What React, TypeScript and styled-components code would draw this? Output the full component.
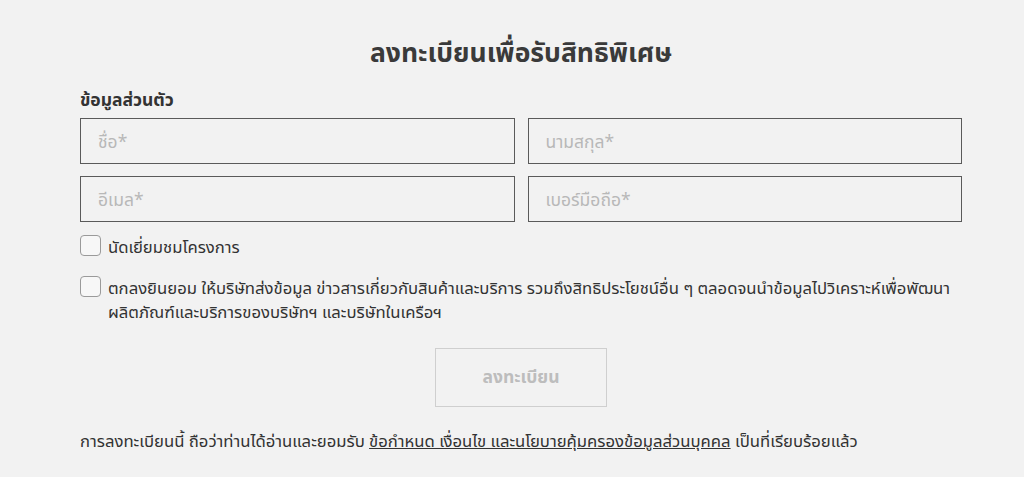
import React from "react";
import styled, { createGlobalStyle } from "styled-components";

const Global = createGlobalStyle`
  html, body { margin: 0; padding: 0; background: #f2f2f2; }
  body { font-family: "Noto Sans", "Noto Sans Thai", sans-serif; color: #333; }
  * { box-sizing: border-box; }
`;

const Page = styled.div`
  width: 1024px;
  height: 477px;
  background: #f2f2f2;
  padding: 30px 62px 0 80px;
  overflow: hidden;
`;

const Title = styled.h1`
  margin: 0;
  text-align: center;
  font-size: 26.5px;
  font-weight: 700;
  color: #3a3a3a;
  line-height: 44px;
`;

const Section = styled.div`
  margin-top: 14px;
  font-size: 17.5px;
  font-weight: 700;
  color: #333;
  line-height: 22px;
`;

const Grid = styled.div`
  margin-top: 8px;
  display: grid;
  grid-template-columns: 1fr 1fr;
  column-gap: 13px;
  row-gap: 12px;
`;

const Input = styled.input`
  height: 46px;
  width: 100%;
  border: 1.5px solid #5a5a5a;
  background: #f2f2f2;
  padding: 0 17px;
  font-family: inherit;
  font-size: 17.5px;
  color: #333;
  outline: none;
  &::placeholder { color: #b8b8b8; }
`;

const CheckRow = styled.label<{ $top: number }>`
  display: flex;
  align-items: flex-start;
  gap: 7px;
  margin-top: ${(p) => p.$top}px;
  font-size: 16.7px;
  line-height: 24px;
  color: #333;
`;

const Box = styled.span`
  flex: none;
  width: 21px;
  height: 21px;
  border: 1px solid #9a9a9a;
  border-radius: 4px;
  background: #f7f7f7;
`;

const ButtonWrap = styled.div`
  display: flex;
  justify-content: center;
  margin-top: 24px;
`;

const Button = styled.button`
  width: 172px;
  height: 59px;
  border: 1px solid #cfcfcf;
  background: #f2f2f2;
  color: #bdbdbd;
  font-family: inherit;
  font-size: 17.5px;
  font-weight: 700;
`;

const Footer = styled.p`
  margin: 23px 0 0;
  font-size: 16.7px;
  line-height: 22px;
  color: #333;
`;

const Link = styled.a`
  color: #333;
  text-decoration: underline;
`;

export default function App() {
  return (
    <>
      <Global />
      <Page>
        <Title>ลงทะเบียนเพื่อรับสิทธิพิเศษ</Title>
        <Section>ข้อมูลส่วนตัว</Section>
        <Grid>
          <Input placeholder="ชื่อ*" />
          <Input placeholder="นามสกุล*" />
          <Input placeholder="อีเมล*" />
          <Input placeholder="เบอร์มือถือ*" />
        </Grid>
        <CheckRow $top={13}>
          <Box />
          <span>นัดเยี่ยมชมโครงการ</span>
        </CheckRow>
        <CheckRow $top={17}>
          <Box />
          <span>
            ตกลงยินยอม ให้บริษัทส่งข้อมูล ข่าวสารเกี่ยวกับสินค้าและบริการ รวมถึงสิทธิประโยชน์อื่น ๆ ตลอดจนนำข้อมูลไปวิเคราะห์เพื่อพัฒนา
            <br />
            ผลิตภัณฑ์และบริการของบริษัทฯ และบริษัทในเครือฯ
          </span>
        </CheckRow>
        <ButtonWrap>
          <Button>ลงทะเบียน</Button>
        </ButtonWrap>
        <Footer>
          การลงทะเบียนนี้ ถือว่าท่านได้อ่านและยอมรับ <Link>ข้อกำหนด เงื่อนไข และนโยบายคุ้มครองข้อมูลส่วนบุคคล</Link> เป็นที่เรียบร้อยแล้ว
        </Footer>
      </Page>
    </>
  );
}
